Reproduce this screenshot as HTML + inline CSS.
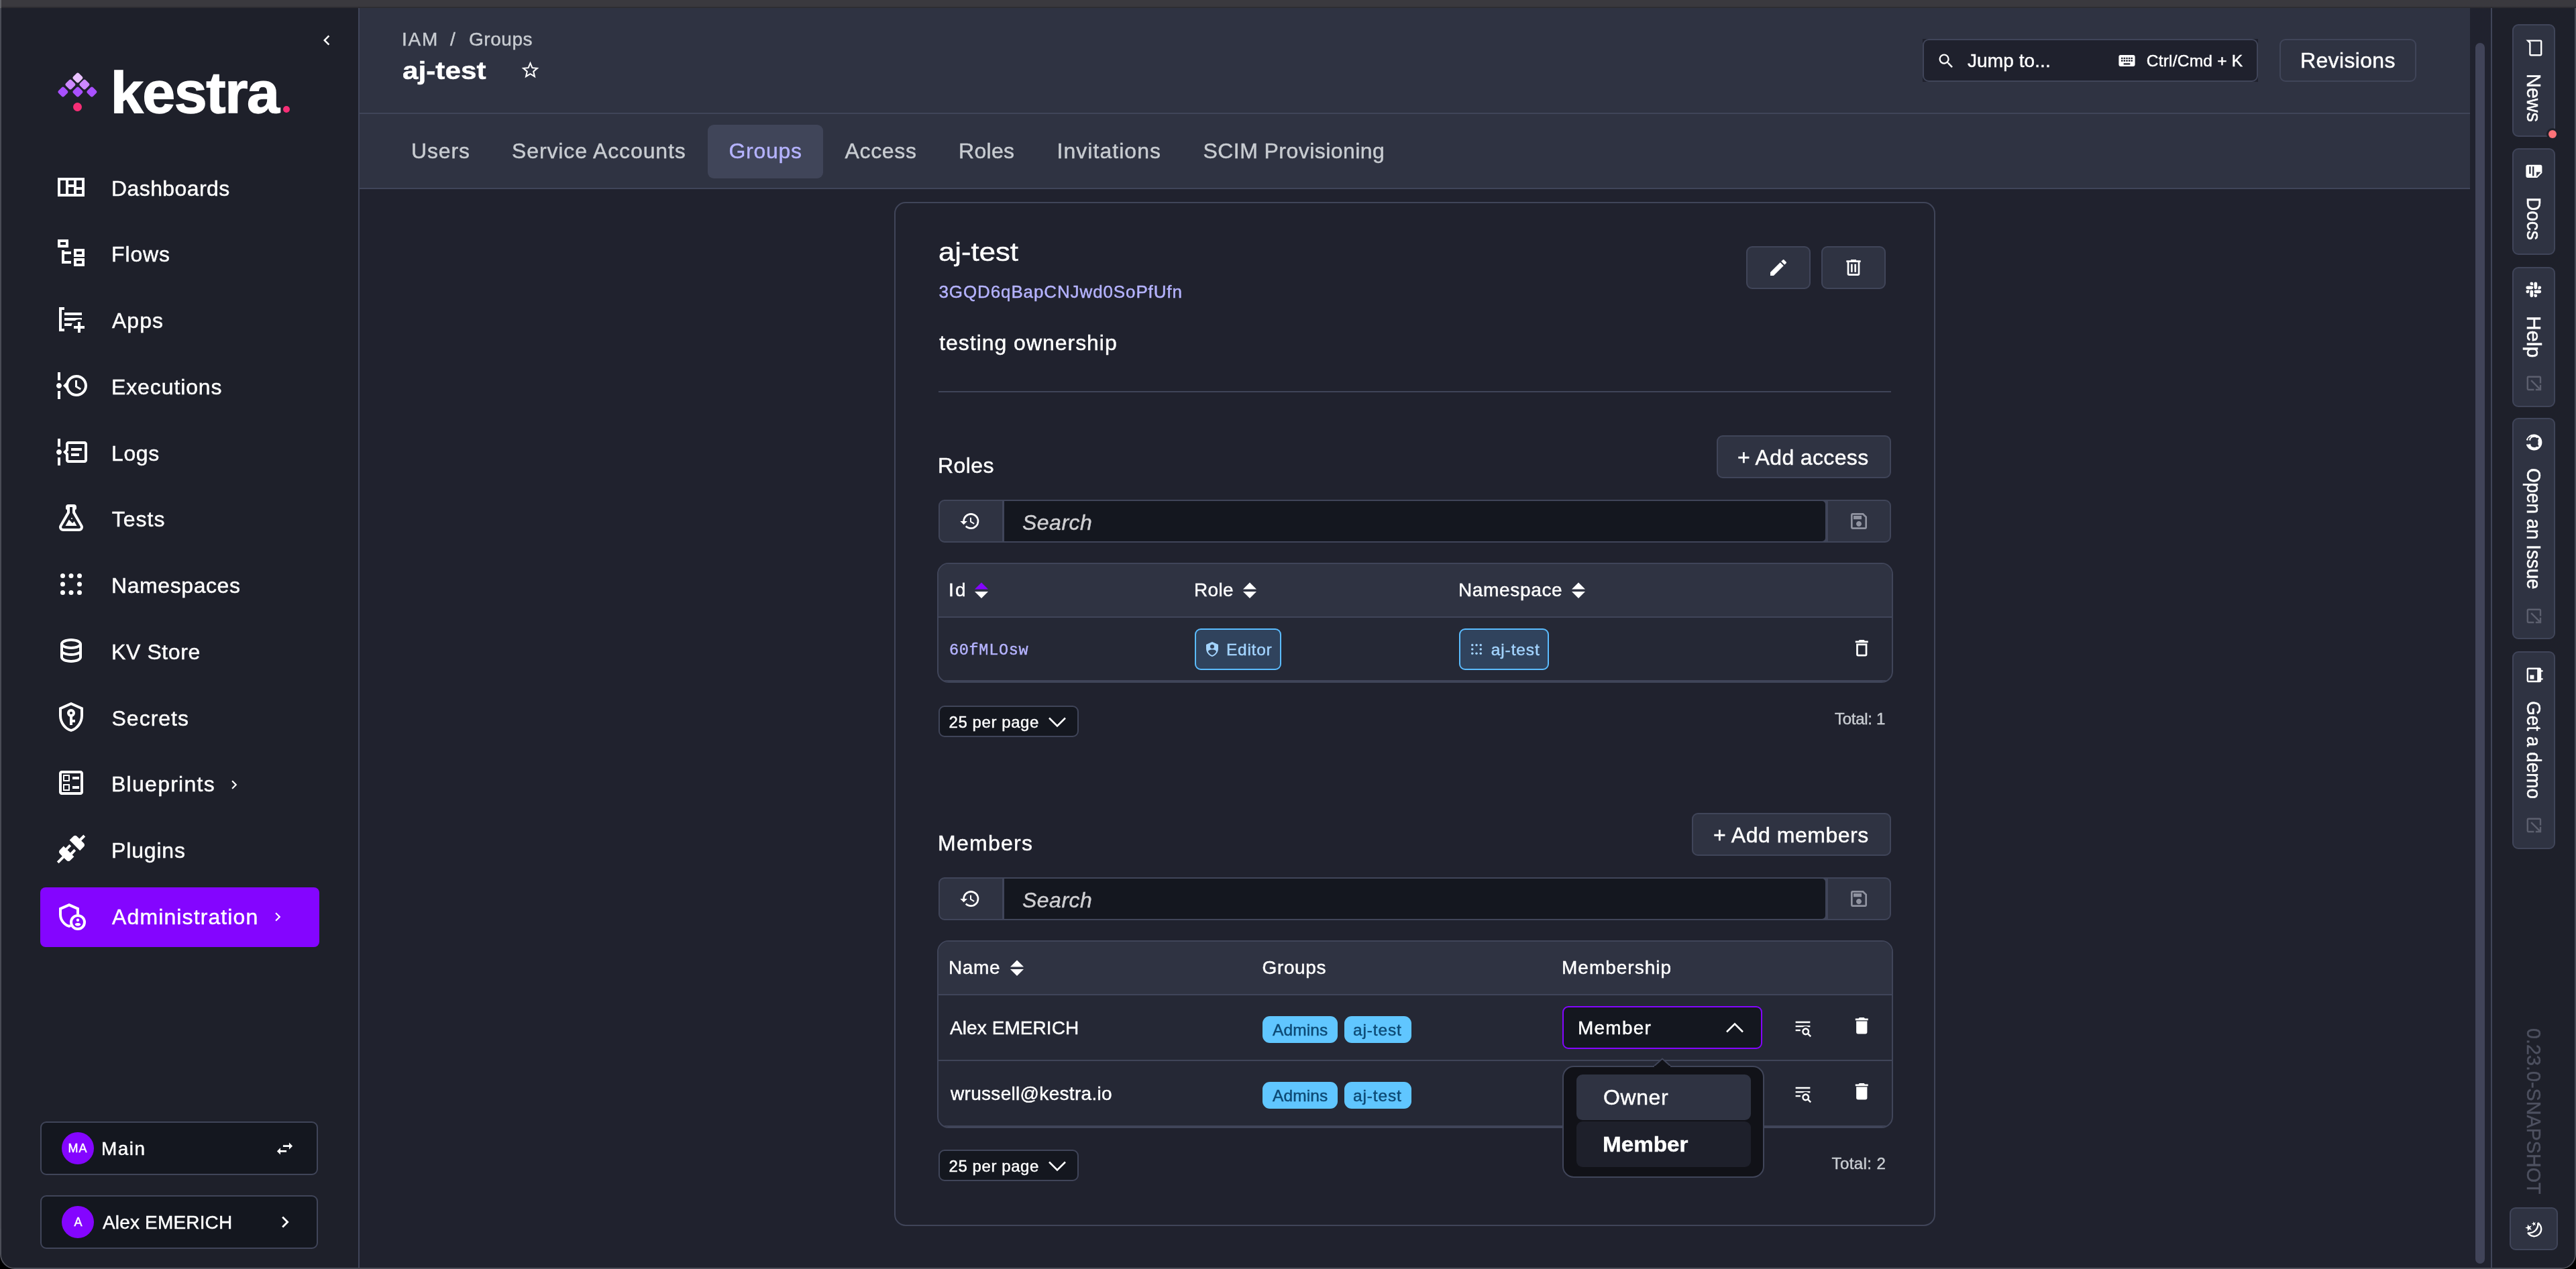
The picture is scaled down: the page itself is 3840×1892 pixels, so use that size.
<!DOCTYPE html>
<html lang="en"><head><meta charset="utf-8"><title>IAM / Groups / aj-test - Kestra</title>
<style>
html,body{margin:0;padding:0;background:#000;}
body{width:3840px;height:1892px;position:relative;overflow:hidden;font-family:'Liberation Sans', sans-serif;}
#app{position:absolute;left:0;top:0;width:3840px;height:1892px;overflow:hidden;will-change:transform;}
#app div,#app svg{position:absolute;}
.t{white-space:nowrap;line-height:1;-webkit-text-stroke:0.45px currentColor;}
</style></head><body><div id="app">
<div style="left:0px;top:0px;width:3840px;height:10px;background:#3a393e"></div>
<div style="left:0px;top:10px;width:3840px;height:2px;background:#2e2d32"></div>
<div style="left:0px;top:12px;width:535px;height:1880px;background:#1e202a"></div>
<div style="left:534px;top:12px;width:2px;height:1880px;background:#404559"></div>
<div style="left:536px;top:12px;width:3177px;height:1880px;background:#20222e"></div>
<div style="left:536px;top:12px;width:3146px;height:157px;background:#2f3342"></div>
<div style="left:536px;top:168px;width:3146px;height:2px;background:#404559"></div>
<div style="left:536px;top:170px;width:3146px;height:110px;background:#2f3342"></div>
<div style="left:536px;top:280px;width:3146px;height:2px;background:#404559"></div>
<div style="left:3690px;top:64px;width:14px;height:1820px;background:#414459;border-radius:7px"></div>
<div style="left:3713px;top:12px;width:2px;height:1880px;background:#404559"></div>
<div style="left:3715px;top:12px;width:125px;height:1880px;background:#1e202a"></div>
<svg viewBox="0 0 24 24" style="left:472.00px;top:44.50px;width:30px;height:30px;"><path fill="#fff" fill-rule="evenodd" d="M15.41,16.58L10.83,12L15.41,7.41L14,6L8,12L14,18L15.41,16.58Z"/></svg>
<div style="left:109.50px;top:109.50px;width:11.8px;height:11.8px;background:#e9c1ff;border-radius:2.8px;transform:rotate(45deg)"></div>
<div style="left:98.90px;top:120.20px;width:11.8px;height:11.8px;background:#cd88ff;border-radius:2.8px;transform:rotate(45deg)"></div>
<div style="left:120.10px;top:120.20px;width:11.8px;height:11.8px;background:#cd88ff;border-radius:2.8px;transform:rotate(45deg)"></div>
<div style="left:88.40px;top:131.00px;width:11.8px;height:11.8px;background:#a950ff;border-radius:2.8px;transform:rotate(45deg)"></div>
<div style="left:109.50px;top:131.00px;width:11.8px;height:11.8px;background:#a950ff;border-radius:2.8px;transform:rotate(45deg)"></div>
<div style="left:130.70px;top:131.00px;width:11.8px;height:11.8px;background:#a950ff;border-radius:2.8px;transform:rotate(45deg)"></div>
<div style="left:108.9px;top:152.5px;width:13px;height:13px;background:#f62e76;border-radius:50%"></div>
<div class="t" style="-webkit-text-stroke:1.4px #fff;left:164.70px;top:93.90px;font-size:88px;letter-spacing:-1.41px;color:#fff;font-weight:700;">kestra</div>
<div style="left:421.7px;top:158px;width:10px;height:10px;background:#f62e76;border-radius:50%"></div>
<svg viewBox="0 0 24 24" style="left:81.50px;top:254.50px;width:48px;height:48px;"><path fill="#fff" fill-rule="evenodd" d="M2 5H22V19H2ZM4 7V17H8V7ZM10 7V10H14V7ZM10 12V17H14V12ZM16 7V12H20V7ZM16 14V17H20V14Z"/></svg>
<div class="t" style="left:166.00px;top:264.50px;font-size:32px;letter-spacing:0.41px;color:#fff;">Dashboards</div>
<svg viewBox="0 0 24 24" style="left:81.50px;top:353.25px;width:48px;height:48px;"><path fill="#fff" fill-rule="evenodd" d="M12 13H7V18H12V20H5V10H7V11H12V13M8 4V6H4V4H8M10 2H2V8H10V2M20 11V13H16V11H20M22 9H14V15H22V9M20 18V20H16V18H20M22 16H14V22H22V16Z"/></svg>
<div class="t" style="left:166.00px;top:363.25px;font-size:32px;letter-spacing:0.86px;color:#fff;">Flows</div>
<svg viewBox="0 0 24 24" style="left:81.5px;top:452.0px;width:48px;height:48px"><path fill="#fff" d="M3 3V21H7V19H5V5H7V3ZM7 7H20V9H7ZM7 11H20V13H7ZM7 15H13V17H7Z"/><circle cx="18" cy="18" r="5.9" fill="#1e202a"/><path fill="#fff" d="M17 14H19V17H22V19H19V22H17V19H14V17H17Z"/></svg>
<div class="t" style="left:167.00px;top:462.00px;font-size:32px;letter-spacing:1.02px;color:#fff;">Apps</div>
<svg viewBox="0 0 24 24" style="left:81.50px;top:550.75px;width:48px;height:48px;"><path fill="#fff" fill-rule="evenodd" d="M4 2V8H2V2H4M2 22H4V16H2V22M5 12C5 13.11 4.11 14 3 14C1.9 14 1 13.11 1 12C1 10.9 1.9 10 3 10C4.11 10 5 10.9 5 12M16 4C20.42 4 24 7.58 24 12C24 16.42 20.42 20 16 20C12.4 20 9.36 17.62 8.35 14.35L6 12L8.35 9.65C9.36 6.38 12.4 4 16 4M16 6C12.69 6 10 8.69 10 12C10 15.31 12.69 18 16 18C19.31 18 22 15.31 22 12C22 8.69 19.31 6 16 6M15 13V8H16.5V12.2L19.5 14L18.82 15.26L15 13Z"/></svg>
<div class="t" style="left:166.00px;top:560.75px;font-size:32px;letter-spacing:0.89px;color:#fff;">Executions</div>
<svg viewBox="0 0 24 24" style="left:81.50px;top:649.50px;width:48px;height:48px;"><path fill="#fff" fill-rule="evenodd" d="M5 12C5 13.11 4.11 14 3 14S1 13.11 1 12 1.9 10 3 10 5 10.9 5 12M4 2V8H2V2H4M2 22V16H4V22H2M24 6V18C24 19.11 23.11 20 22 20H10C8.9 20 8 19.11 8 18V14L6 12L8 10V6C8 4.89 8.9 4 10 4H22C23.11 4 24 4.89 24 6M10 6V10.83L8.83 12L10 13.17V18H22V6H10M12 9H20V11H12V9M12 13H18V15H12V13Z"/></svg>
<div class="t" style="left:166.00px;top:659.50px;font-size:32px;letter-spacing:0.62px;color:#fff;">Logs</div>
<svg viewBox="0 0 24 24" style="left:81.50px;top:748.25px;width:48px;height:48px;"><path fill="#fff" fill-rule="evenodd" d="M5,19A1,1 0 0,0 6,20H18A1,1 0 0,0 19,19C19,18.79 18.93,18.59 18.82,18.43L13,8.35V4H11V8.35L5.18,18.43C5.07,18.59 5,18.79 5,19M6,22A3,3 0 0,1 3,19C3,18.4 3.18,17.84 3.5,17.37L9,7.81V6A1,1 0 0,1 8,5V4A2,2 0 0,1 10,2H14A2,2 0 0,1 16,4V5A1,1 0 0,1 15,6V7.81L20.5,17.37C20.82,17.84 21,18.4 21,19A3,3 0 0,1 18,22H6M13,16L14.34,14.66L16.27,18H7.73L10.39,13.39L13,16M12.5,12A0.5,0.5 0 0,1 13,12.5A0.5,0.5 0 0,1 12.5,13A0.5,0.5 0 0,1 12,12.5A0.5,0.5 0 0,1 12.5,12Z"/></svg>
<div class="t" style="left:166.75px;top:758.25px;font-size:32px;letter-spacing:1.02px;color:#fff;">Tests</div>
<svg viewBox="0 0 24 24" style="left:81.5px;top:847.0px;width:48px;height:48px"><circle cx="5.75" cy="5.75" r="1.75" fill="#fff"/><circle cx="5.75" cy="12" r="1.75" fill="#fff"/><circle cx="5.75" cy="18.25" r="1.75" fill="#fff"/><circle cx="12" cy="5.75" r="1.75" fill="#fff"/><circle cx="12" cy="18.25" r="1.75" fill="#fff"/><circle cx="18.25" cy="5.75" r="1.75" fill="#fff"/><circle cx="18.25" cy="12" r="1.75" fill="#fff"/><circle cx="18.25" cy="18.25" r="1.75" fill="#fff"/></svg>
<div class="t" style="left:166.00px;top:857.00px;font-size:32px;letter-spacing:0.58px;color:#fff;">Namespaces</div>
<svg viewBox="0 0 24 24" style="left:81.50px;top:945.75px;width:48px;height:48px;"><path fill="#fff" fill-rule="evenodd" d="M12 3C7.58 3 4 4.79 4 7V17C4 19.21 7.59 21 12 21S20 19.21 20 17V7C20 4.79 16.42 3 12 3M18 17C18 17.5 15.87 19 12 19S6 17.5 6 17V14.77C7.61 15.55 9.72 16 12 16S16.39 15.55 18 14.77V17M18 12.45C16.7 13.4 14.42 14 12 14C9.58 14 7.3 13.4 6 12.45V9.64C7.47 10.47 9.61 11 12 11C14.39 11 16.53 10.47 18 9.64V12.45M12 9C8.13 9 6 7.5 6 7S8.13 5 12 5C15.87 5 18 6.5 18 7S15.87 9 12 9Z"/></svg>
<div class="t" style="left:166.00px;top:955.75px;font-size:32px;letter-spacing:0.6px;color:#fff;">KV Store</div>
<svg viewBox="0 0 24 24" style="left:81.50px;top:1044.50px;width:48px;height:48px;"><path fill="#fff" fill-rule="evenodd" d="M21,11C21,16.55 17.16,21.74 12,23C6.84,21.74 3,16.55 3,11V5L12,1L21,5V11M12,21C15.75,20 19,15.54 19,11.22V6.3L12,3.18L5,6.3V11.22C5,15.54 8.25,20 12,21M12,6A3,3 0 0,1 15,9C15,10.31 14.17,11.42 13,11.83V14H15V16H13V18H11V11.83C9.83,11.42 9,10.31 9,9A3,3 0 0,1 12,6M12,8A1,1 0 0,0 11,9A1,1 0 0,0 12,10A1,1 0 0,0 13,9A1,1 0 0,0 12,8Z"/></svg>
<div class="t" style="left:166.50px;top:1054.50px;font-size:32px;letter-spacing:1.0px;color:#fff;">Secrets</div>
<svg viewBox="0 0 24 24" style="left:81.50px;top:1143.25px;width:48px;height:48px;"><path fill="#fff" fill-rule="evenodd" d="M13 7.5H18V9.5H13V7.5M13 14.5H18V16.5H13V14.5M19 3C20.1 3 21 3.9 21 5V19C21 20.1 20.1 21 19 21H5C3.9 21 3 20.1 3 19V5C3 3.9 3.9 3 5 3H19M19 19V5H5V19H19M11 6V11H6V6H11M10 10V7H7V10H10M11 13V18H6V13H11M10 17V14H7V17H10Z"/></svg>
<div class="t" style="left:166.00px;top:1153.25px;font-size:32px;letter-spacing:1.27px;color:#fff;">Blueprints</div>
<svg viewBox="0 0 24 24" style="left:335.50px;top:1157.00px;width:26px;height:26px;"><path fill="#fff" fill-rule="evenodd" d="M8.59,16.58L13.17,12L8.59,7.41L10,6L16,12L10,18L8.59,16.58Z"/></svg>
<svg viewBox="0 0 24 24" style="left:81.50px;top:1242.00px;width:48px;height:48px;"><path fill="#fff" fill-rule="evenodd" d="M21.4 7.5C22.2 8.3 22.2 9.6 21.4 10.3L18.6 13.1L10.8 5.3L13.6 2.5C14.4 1.7 15.7 1.7 16.4 2.5L18.2 4.3L21.2 1.3L22.6 2.7L19.6 5.7L21.4 7.5M15.6 13.3L14.2 11.9L11.4 14.7L9.3 12.6L12.1 9.8L10.7 8.4L7.9 11.2L6.4 9.8L3.6 12.6C2.8 13.4 2.8 14.7 3.6 15.4L5.4 17.2L1.4 21.2L2.8 22.6L6.8 18.6L8.6 20.4C9.4 21.2 10.7 21.2 11.4 20.4L14.2 17.6L12.8 16.2L15.6 13.3Z"/></svg>
<div class="t" style="left:166.00px;top:1252.00px;font-size:32px;letter-spacing:0.84px;color:#fff;">Plugins</div>
<div style="left:60px;top:1323px;width:416px;height:89px;background:#8405ff;border-radius:8px"></div>
<svg viewBox="0 0 24 24" style="left:81.5px;top:1340.75px;width:48px;height:48px"><path fill="none" stroke="#fff" stroke-width="2" stroke-linejoin="miter" d="M10.5 4.1L17 6.95V11.2C17 15.2 14.2 18.9 10.5 19.95C6.8 18.9 4 15.2 4 11.2V6.95Z"/><circle cx="17" cy="17" r="6" fill="#8405ff"/><circle cx="17" cy="17" r="5" fill="none" stroke="#fff" stroke-width="2"/><circle cx="17" cy="15.4" r="1.1" fill="#fff"/><path fill="#fff" d="M14.8 18.6C14.8 17.9 16.3 17.5 17 17.5S19.2 17.9 19.2 18.6C18.8 19.3 17.9 19.8 17 19.8S15.2 19.3 14.8 18.6Z"/></svg>
<div class="t" style="left:167.00px;top:1350.75px;font-size:32px;letter-spacing:1.12px;color:#fff;">Administration</div>
<svg viewBox="0 0 24 24" style="left:400.50px;top:1353.50px;width:26px;height:26px;"><path fill="#fff" fill-rule="evenodd" d="M8.59,16.58L13.17,12L8.59,7.41L10,6L16,12L10,18L8.59,16.58Z"/></svg>
<div style="left:60px;top:1672px;width:414px;height:80px;background:#14171f;border:2px solid #404559;border-radius:9px;box-sizing:border-box"></div>
<div style="left:92px;top:1688px;width:48px;height:48px;background:#8405ff;border-radius:50%"></div>
<div class="t" style="left:101.50px;top:1702.50px;font-size:18px;letter-spacing:1.01px;color:#fff;">MA</div>
<div class="t" style="left:151.00px;top:1699.00px;font-size:28px;letter-spacing:1.46px;color:#fff;">Main</div>
<div style="left:60px;top:1782px;width:414px;height:80px;background:#14171f;border:2px solid #404559;border-radius:9px;box-sizing:border-box"></div>
<div style="left:92px;top:1798px;width:48px;height:48px;background:#8405ff;border-radius:50%"></div>
<div class="t" style="left:110.50px;top:1812.50px;font-size:18px;color:#fff;">A</div>
<div class="t" style="left:153.00px;top:1809.00px;font-size:28px;letter-spacing:0.17px;color:#fff;">Alex EMERICH</div>
<svg viewBox="0 0 24 24" style="left:408.50px;top:1696.50px;width:31px;height:31px;"><path fill="#fff" fill-rule="evenodd" d="M21,9L17,5V8H10V10H17V13M7,11L3,15L7,19V16H14V14H7V11Z"/></svg>
<svg viewBox="0 0 24 24" style="left:408.00px;top:1804.50px;width:34px;height:34px;"><path fill="#fff" fill-rule="evenodd" d="M8.59,16.58L13.17,12L8.59,7.41L10,6L16,12L10,18L8.59,16.58Z"/></svg>
<div class="t" style="left:599.00px;top:45.00px;font-size:28px;letter-spacing:1.77px;color:#c8ccd1;">IAM</div>
<div class="t" style="left:671.00px;top:45.00px;font-size:28px;color:#c8ccd1;">/</div>
<div class="t" style="left:699.00px;top:45.00px;font-size:28px;letter-spacing:0.54px;color:#c8ccd1;">Groups</div>
<div class="t" style="left:599.87px;top:86.50px;font-size:37.5px;transform:scaleX(1.1277);transform-origin:0 0;color:#fff;font-weight:700;">aj-test</div>
<svg viewBox="0 0 24 24" style="left:774.50px;top:88.50px;width:31px;height:31px;"><path fill="#fff" fill-rule="evenodd" d="M12,15.39L8.24,17.66L9.23,13.38L5.91,10.5L10.29,10.13L12,6.09L13.71,10.13L18.09,10.5L14.77,13.38L15.76,17.66M22,9.24L14.81,8.63L12,2L9.19,8.63L2,9.24L7.45,13.97L5.82,21L12,17.27L18.18,21L16.54,13.97L22,9.24Z"/></svg>
<div style="left:2866px;top:58px;width:500px;height:64px;background:#1f212d"></div>
<div style="left:2866px;top:58px;width:500px;height:64px;background:#1f212d;border:2px solid #404559;border-radius:9px;box-sizing:border-box"></div>
<svg viewBox="0 0 24 24" style="left:2887.30px;top:76.50px;width:28px;height:28px;"><path fill="#fff" fill-rule="evenodd" d="M9.5,3A6.5,6.5 0 0,1 16,9.5C16,11.11 15.41,12.59 14.44,13.73L14.71,14H15.5L20.5,19L19,20.5L14,15.5V14.71L13.73,14.44C12.59,15.41 11.11,16 9.5,16A6.5,6.5 0 0,1 3,9.5A6.5,6.5 0 0,1 9.5,3M9.5,5C7,5 5,7 5,9.5C5,12 7,14 9.5,14C12,14 14,12 14,9.5C14,7 12,5 9.5,5Z"/></svg>
<div class="t" style="left:2933.00px;top:77.00px;font-size:28px;letter-spacing:0.09px;color:#fff;">Jump to...</div>
<svg viewBox="0 0 24 24" style="left:3155.50px;top:75.50px;width:29px;height:29px;"><path fill="#fff" fill-rule="evenodd" d="M19,10H17V8H19M19,13H17V11H19M16,10H14V8H16M16,13H14V11H16M16,17H8V15H16M7,10H5V8H7M7,13H5V11H7M8,11H10V13H8M8,8H10V10H8M11,11H13V13H11M11,8H13V10H11M20,5H4C2.89,5 2,5.89 2,7V17A2,2 0 0,0 4,19H20A2,2 0 0,0 22,17V7C22,5.89 21.1,5 20,5Z"/></svg>
<div class="t" style="left:3199.75px;top:79.00px;font-size:24.5px;letter-spacing:0.22px;color:#fff;">Ctrl/Cmd + K</div>
<div style="left:3398px;top:58px;width:204px;height:64px;background:#2f3342;border:2px solid #404559;border-radius:9px;box-sizing:border-box"></div>
<div class="t" style="left:3429.00px;top:74.00px;font-size:32px;letter-spacing:0.35px;color:#fff;">Revisions</div>
<div style="left:1055px;top:186px;width:172px;height:80px;background:#404559;border-radius:9px"></div>
<div class="t" style="left:613.00px;top:209.00px;font-size:32px;letter-spacing:0.86px;color:#c8ccd1;">Users</div>
<div class="t" style="left:763.00px;top:209.00px;font-size:32px;letter-spacing:0.89px;color:#c8ccd1;">Service Accounts</div>
<div class="t" style="left:1086.50px;top:209.00px;font-size:32px;letter-spacing:0.71px;color:#b5b3ff;">Groups</div>
<div class="t" style="left:1259.50px;top:209.00px;font-size:32px;letter-spacing:0.67px;color:#c8ccd1;">Access</div>
<div class="t" style="left:1429.00px;top:209.00px;font-size:32px;letter-spacing:0.3px;color:#c8ccd1;">Roles</div>
<div class="t" style="left:1575.50px;top:209.00px;font-size:32px;letter-spacing:1.04px;color:#c8ccd1;">Invitations</div>
<div class="t" style="left:1793.50px;top:209.00px;font-size:32px;letter-spacing:0.44px;color:#c8ccd1;">SCIM Provisioning</div>
<div style="left:1333px;top:301px;width:1552px;height:1527px;border:2px solid #404559;border-radius:17px;box-sizing:border-box;background:#20222e"></div>
<div class="t" style="left:1399.09px;top:356.30px;font-size:39.5px;transform:scaleX(1.1052);transform-origin:0 0;color:#fff;">aj-test</div>
<div class="t" style="left:1399.50px;top:421.70px;font-size:26px;letter-spacing:0.88px;color:#b5b3ff;">3GQD6qBapCNJwd0SoPfUfn</div>
<div class="t" style="left:1400.20px;top:495.00px;font-size:32px;letter-spacing:0.97px;color:#fff;">testing ownership</div>
<div style="left:2603px;top:367px;width:96px;height:64px;background:#2f3342;border:2px solid #404559;border-radius:9px;box-sizing:border-box"></div>
<div style="left:2715px;top:367px;width:96px;height:64px;background:#2f3342;border:2px solid #404559;border-radius:9px;box-sizing:border-box"></div>
<svg viewBox="0 0 24 24" style="left:2635.00px;top:383.00px;width:32px;height:32px;"><path fill="#fff" fill-rule="evenodd" d="M20.71,7.04C21.1,6.65 21.1,6 20.71,5.63L18.37,3.29C18,2.9 17.35,2.9 16.96,3.29L15.12,5.12L18.87,8.87M3,17.25V21H6.75L17.81,9.93L14.06,6.18L3,17.25Z"/></svg>
<svg viewBox="0 0 24 24" style="left:2747.00px;top:383.00px;width:32px;height:32px;"><path fill="#fff" fill-rule="evenodd" d="M9,3V4H4V6H5V19A2,2 0 0,0 7,21H17A2,2 0 0,0 19,19V6H20V4H15V3H9M7,6H17V19H7V6M9,8V17H11V8H9M13,8V17H15V8H13Z"/></svg>
<div style="left:1399px;top:583px;width:1420px;height:2px;background:#404559"></div>
<div class="t" style="left:1398.00px;top:678.00px;font-size:32px;letter-spacing:0.42px;color:#fff;">Roles</div>
<div style="left:2559px;top:649px;width:260px;height:64px;background:#2f3342;border:2px solid #404559;border-radius:9px;box-sizing:border-box"></div>
<div class="t" style="left:2590.00px;top:665.50px;font-size:32px;letter-spacing:0.36px;color:#fff;">+ Add access</div>
<div style="left:1399px;top:745px;width:1420px;height:64px;background:#2f3342;border:2px solid #404559;border-radius:9px;box-sizing:border-box"></div>
<div style="left:1494px;top:745px;width:1231px;height:64px;background:#404559"></div>
<div style="left:1497px;top:747px;width:1224px;height:60px;background:#14171f;border-radius:0 5px 5px 0"></div>
<svg viewBox="0 0 24 24" style="left:1429.50px;top:761.00px;width:32px;height:32px;"><path fill="#fff" fill-rule="evenodd" d="M13.5,8H12V13L16.28,15.54L17,14.33L13.5,12.25V8M13,3A9,9 0 0,0 4,12H1L4.96,16.03L9,12H6A7,7 0 0,1 13,5A7,7 0 0,1 20,12A7,7 0 0,1 13,19C11.07,19 9.32,18.21 8.06,16.94L6.64,18.36C8.27,20 10.5,21 13,21A9,9 0 0,0 22,12A9,9 0 0,0 13,3"/></svg>
<div class="t" style="left:1524.00px;top:763.00px;font-size:32px;letter-spacing:0.48px;color:#cfcfd2;font-style:italic;">Search</div>
<svg viewBox="0 0 24 24" style="left:2755.00px;top:761.00px;width:32px;height:32px;"><path fill="#9093a0" fill-rule="evenodd" d="M17 3H5C3.89 3 3 3.9 3 5V19C3 20.1 3.89 21 5 21H19C20.1 21 21 20.1 21 19V7L17 3M19 19H5V5H16.17L19 7.83V19M12 12C10.34 12 9 13.34 9 15S10.34 18 12 18 15 16.66 15 15 13.66 12 12 12M6 6H15V10H6V6Z"/></svg>
<div style="left:1397px;top:839px;width:1425px;height:179px;background:#252835;border:2px solid #404559;border-radius:17px;box-sizing:border-box;overflow:hidden"><div style="left:0;top:0;width:1425px;height:78px;background:#2f3342"></div><div style="left:0;top:78px;width:1425px;height:2px;background:#404559"></div><div style="left:0;top:173px;width:1425px;height:4px;background:#404559"></div></div>
<div class="t" style="left:1414.00px;top:866.00px;font-size:28px;letter-spacing:2.22px;color:#fff;">Id</div>
<svg viewBox="0 0 20 24" style="left:1453px;top:868px;width:20px;height:24px"><path fill="#8405ff" d="M0 10.5L10 0.5L20 10.5Z"/><path fill="#fff" d="M0 14L10 24L20 14Z"/></svg>
<div class="t" style="left:1780.00px;top:866.00px;font-size:28px;letter-spacing:0.33px;color:#fff;">Role</div>
<svg viewBox="0 0 20 24" style="left:1853px;top:868px;width:20px;height:24px"><path fill="#fff" d="M0 10.5L10 0.5L20 10.5Z"/><path fill="#fff" d="M0 14L10 24L20 14Z"/></svg>
<div class="t" style="left:2174.00px;top:866.00px;font-size:28px;letter-spacing:0.65px;color:#fff;">Namespace</div>
<svg viewBox="0 0 20 24" style="left:2343px;top:868px;width:20px;height:24px"><path fill="#fff" d="M0 10.5L10 0.5L20 10.5Z"/><path fill="#fff" d="M0 14L10 24L20 14Z"/></svg>
<div class="t" style="left:1415.00px;top:958.30px;font-size:23.5px;letter-spacing:0.68px;color:#b5b3ff;font-family:'Liberation Mono', monospace;">60fMLOsw</div>
<div style="left:1781px;top:937px;width:128.5px;height:61.5px;background:#30435d;border:2px solid #5bbcff;border-radius:9px;box-sizing:border-box"></div>
<svg viewBox="0 0 24 24" style="left:1795.00px;top:956.00px;width:24px;height:24px;"><path fill="#a3d4ff" fill-rule="evenodd" d="M12,1L3,5V11C3,16.55 6.84,21.74 12,23C17.16,21.74 21,16.55 21,11V5L12,1M12,5A3,3 0 0,1 15,8A3,3 0 0,1 12,11A3,3 0 0,1 9,8A3,3 0 0,1 12,5M17.13,17C15.92,18.85 14.11,20.24 12,20.92C9.89,20.24 8.08,18.85 6.87,17C6.53,16.5 6.24,16 6,15.47C6,13.82 8.71,12.47 12,12.47C15.29,12.47 18,13.79 18,15.47C17.76,16 17.47,16.5 17.13,17Z"/></svg>
<div class="t" style="left:1828.00px;top:956.50px;font-size:24.5px;letter-spacing:0.73px;color:#a3d4ff;">Editor</div>
<div style="left:2175px;top:937px;width:134px;height:61.5px;background:#30435d;border:2px solid #5bbcff;border-radius:9px;box-sizing:border-box"></div>
<svg viewBox="0 0 24 24" style="left:2189px;top:956px;width:24px;height:24px"><circle cx="5.75" cy="5.75" r="1.75" fill="#a3d4ff"/><circle cx="5.75" cy="12" r="1.75" fill="#a3d4ff"/><circle cx="5.75" cy="18.25" r="1.75" fill="#a3d4ff"/><circle cx="12" cy="5.75" r="1.75" fill="#a3d4ff"/><circle cx="12" cy="18.25" r="1.75" fill="#a3d4ff"/><circle cx="18.25" cy="5.75" r="1.75" fill="#a3d4ff"/><circle cx="18.25" cy="12" r="1.75" fill="#a3d4ff"/><circle cx="18.25" cy="18.25" r="1.75" fill="#a3d4ff"/></svg>
<div class="t" style="left:2222.75px;top:956.50px;font-size:24.5px;letter-spacing:0.89px;color:#a3d4ff;">aj-test</div>
<svg viewBox="0 0 24 24" style="left:2758.50px;top:949.75px;width:32.5px;height:32.5px;"><path fill="#fff" fill-rule="evenodd" d="M6,19A2,2 0 0,0 8,21H16A2,2 0 0,0 18,19V7H6V19M8,9H16V19H8V9M15.5,4L14.5,3H9.5L8.5,4H5V6H19V4H15.5Z"/></svg>
<div style="left:1399px;top:1052px;width:209px;height:47px;background:#14171f;border:2px solid #404559;border-radius:9px;box-sizing:border-box"></div>
<div class="t" style="left:1414.50px;top:1064.50px;font-size:24px;letter-spacing:0.57px;color:#fff;">25 per page</div>
<svg viewBox="0 0 26 16" style="left:1562.5px;top:1068.5px;width:26px;height:16px"><path fill="none" stroke="#fff" stroke-width="2.6" d="M1 1.5L13 13.5L25 1.5"/></svg>
<div class="t" style="left:2735.00px;top:1059.50px;font-size:24px;letter-spacing:-0.29px;color:#c8ccd1;">Total: 1</div>
<div class="t" style="left:1398.00px;top:1241.00px;font-size:32px;letter-spacing:1.27px;color:#fff;">Members</div>
<div style="left:2522px;top:1212px;width:297px;height:64px;background:#2f3342;border:2px solid #404559;border-radius:9px;box-sizing:border-box"></div>
<div class="t" style="left:2554.00px;top:1228.50px;font-size:32px;letter-spacing:0.52px;color:#fff;">+ Add members</div>
<div style="left:1399px;top:1308px;width:1420px;height:64px;background:#2f3342;border:2px solid #404559;border-radius:9px;box-sizing:border-box"></div>
<div style="left:1494px;top:1308px;width:1231px;height:64px;background:#404559"></div>
<div style="left:1497px;top:1310px;width:1224px;height:60px;background:#14171f;border-radius:0 5px 5px 0"></div>
<svg viewBox="0 0 24 24" style="left:1429.50px;top:1324.00px;width:32px;height:32px;"><path fill="#fff" fill-rule="evenodd" d="M13.5,8H12V13L16.28,15.54L17,14.33L13.5,12.25V8M13,3A9,9 0 0,0 4,12H1L4.96,16.03L9,12H6A7,7 0 0,1 13,5A7,7 0 0,1 20,12A7,7 0 0,1 13,19C11.07,19 9.32,18.21 8.06,16.94L6.64,18.36C8.27,20 10.5,21 13,21A9,9 0 0,0 22,12A9,9 0 0,0 13,3"/></svg>
<div class="t" style="left:1524.00px;top:1326.00px;font-size:32px;letter-spacing:0.48px;color:#cfcfd2;font-style:italic;">Search</div>
<svg viewBox="0 0 24 24" style="left:2755.00px;top:1324.00px;width:32px;height:32px;"><path fill="#9093a0" fill-rule="evenodd" d="M17 3H5C3.89 3 3 3.9 3 5V19C3 20.1 3.89 21 5 21H19C20.1 21 21 20.1 21 19V7L17 3M19 19H5V5H16.17L19 7.83V19M12 12C10.34 12 9 13.34 9 15S10.34 18 12 18 15 16.66 15 15 13.66 12 12 12M6 6H15V10H6V6Z"/></svg>
<div style="left:1397px;top:1402px;width:1425px;height:280px;background:#252835;border:2px solid #404559;border-radius:17px;box-sizing:border-box;overflow:hidden"><div style="left:0;top:0;width:1425px;height:78px;background:#2f3342"></div><div style="left:0;top:78px;width:1425px;height:2px;background:#404559"></div><div style="left:0;top:176px;width:1425px;height:2px;background:#404559"></div><div style="left:0;top:274px;width:1425px;height:4px;background:#404559"></div></div>
<div class="t" style="left:1414.00px;top:1429.00px;font-size:28px;letter-spacing:0.63px;color:#fff;">Name</div>
<svg viewBox="0 0 20 24" style="left:1505.75px;top:1431px;width:20px;height:24px"><path fill="#fff" d="M0 10.5L10 0.5L20 10.5Z"/><path fill="#fff" d="M0 14L10 24L20 14Z"/></svg>
<div class="t" style="left:1881.50px;top:1429.00px;font-size:28px;letter-spacing:0.64px;color:#fff;">Groups</div>
<div class="t" style="left:2328.00px;top:1429.00px;font-size:28px;letter-spacing:1.0px;color:#fff;">Membership</div>
<div class="t" style="left:1416.00px;top:1519.00px;font-size:28px;letter-spacing:0.08px;color:#fff;">Alex EMERICH</div>
<div style="left:1882px;top:1515px;width:112px;height:40px;background:#60c6ff;border-radius:11px"></div>
<div class="t" style="left:1897.00px;top:1523.75px;font-size:24.5px;letter-spacing:0.11px;color:#0d4a75;">Admins</div>
<div style="left:2004px;top:1515px;width:100px;height:40px;background:#60c6ff;border-radius:11px"></div>
<div class="t" style="left:2017.00px;top:1523.75px;font-size:24.5px;letter-spacing:0.85px;color:#0d4a75;">aj-test</div>
<svg viewBox="0 0 24 24" style="left:2673.00px;top:1518.00px;width:29px;height:29px;"><path fill="#fff" fill-rule="evenodd" d="M19.31 18.9L22.39 22L21 23.39L17.88 20.32C17.19 20.75 16.37 21 15.5 21C13 21 11 19 11 16.5C11 14 13 12 15.5 12C18 12 20 14 20 16.5C20 17.38 19.75 18.21 19.31 18.9M15.5 19C16.88 19 18 17.88 18 16.5C18 15.12 16.88 14 15.5 14C14.12 14 13 15.12 13 16.5C13 17.88 14.12 19 15.5 19M21 4V6H3V4H21M3 16V14H9V16H3M3 11V9H21V11H18.97C17.96 10.37 16.77 10 15.5 10C14.23 10 13.04 10.37 12.03 11H3Z"/></svg>
<svg viewBox="0 0 24 24" style="left:2758.50px;top:1512.75px;width:32.5px;height:32.5px;"><path fill="#fff" fill-rule="evenodd" d="M19,4H15.5L14.5,3H9.5L8.5,4H5V6H19M6,19A2,2 0 0,0 8,21H16A2,2 0 0,0 18,19V7H6V19Z"/></svg>
<div class="t" style="left:1417.00px;top:1617.00px;font-size:28px;letter-spacing:0.31px;color:#fff;">wrussell@kestra.io</div>
<div style="left:1882px;top:1613px;width:112px;height:40px;background:#60c6ff;border-radius:11px"></div>
<div class="t" style="left:1897.00px;top:1621.75px;font-size:24.5px;letter-spacing:0.11px;color:#0d4a75;">Admins</div>
<div style="left:2004px;top:1613px;width:100px;height:40px;background:#60c6ff;border-radius:11px"></div>
<div class="t" style="left:2017.00px;top:1621.75px;font-size:24.5px;letter-spacing:0.85px;color:#0d4a75;">aj-test</div>
<svg viewBox="0 0 24 24" style="left:2673.00px;top:1616.00px;width:29px;height:29px;"><path fill="#fff" fill-rule="evenodd" d="M19.31 18.9L22.39 22L21 23.39L17.88 20.32C17.19 20.75 16.37 21 15.5 21C13 21 11 19 11 16.5C11 14 13 12 15.5 12C18 12 20 14 20 16.5C20 17.38 19.75 18.21 19.31 18.9M15.5 19C16.88 19 18 17.88 18 16.5C18 15.12 16.88 14 15.5 14C14.12 14 13 15.12 13 16.5C13 17.88 14.12 19 15.5 19M21 4V6H3V4H21M3 16V14H9V16H3M3 11V9H21V11H18.97C17.96 10.37 16.77 10 15.5 10C14.23 10 13.04 10.37 12.03 11H3Z"/></svg>
<svg viewBox="0 0 24 24" style="left:2758.50px;top:1610.75px;width:32.5px;height:32.5px;"><path fill="#fff" fill-rule="evenodd" d="M19,4H15.5L14.5,3H9.5L8.5,4H5V6H19M6,19A2,2 0 0,0 8,21H16A2,2 0 0,0 18,19V7H6V19Z"/></svg>
<div style="left:2329px;top:1500px;width:298px;height:63.5px;background:#14171f;border:2px solid #8405ff;border-radius:9px;box-sizing:border-box"></div>
<div class="t" style="left:2352.00px;top:1519.00px;font-size:28px;letter-spacing:1.23px;color:#fff;">Member</div>
<svg viewBox="0 0 26 16" style="left:2573px;top:1524px;width:26px;height:16px"><path fill="none" stroke="#fff" stroke-width="2.6" d="M1 14.5L13 2.5L25 14.5"/></svg>
<svg viewBox="0 0 28 14" style="left:2464px;top:1577px;width:28px;height:14px"><path fill="#111218" stroke="#404559" stroke-width="2" d="M0 14L14 1.5L28 14"/></svg>
<div style="left:2329px;top:1589px;width:301px;height:167px;background:#111218;border:2px solid #404559;border-radius:17px;box-sizing:border-box"></div>
<div style="left:2466px;top:1589px;width:24px;height:3px;background:#111218"></div>
<div style="left:2350px;top:1602px;width:260px;height:68px;background:#2f3342;border-radius:9px"></div>
<div style="left:2350px;top:1672px;width:260px;height:68px;background:#1e202b;border-radius:9px"></div>
<div class="t" style="left:2390.00px;top:1620.00px;font-size:32px;letter-spacing:0.6px;color:#fff;">Owner</div>
<div class="t" style="left:2388.92px;top:1690.00px;font-size:32px;transform:scaleX(1.0395);transform-origin:0 0;color:#fff;font-weight:700;">Member</div>
<div style="left:1399px;top:1714px;width:209px;height:47px;background:#14171f;border:2px solid #404559;border-radius:9px;box-sizing:border-box"></div>
<div class="t" style="left:1414.50px;top:1726.50px;font-size:24px;letter-spacing:0.57px;color:#fff;">25 per page</div>
<svg viewBox="0 0 26 16" style="left:1562.5px;top:1730.5px;width:26px;height:16px"><path fill="none" stroke="#fff" stroke-width="2.6" d="M1 1.5L13 13.5L25 1.5"/></svg>
<div class="t" style="left:2730.50px;top:1723.00px;font-size:24px;letter-spacing:0.42px;color:#c8ccd1;">Total: 2</div>
<div style="left:3745px;top:36px;width:64px;height:168px;background:#2f3342;border:2px solid #404559;border-radius:9px;box-sizing:border-box"></div>
<svg viewBox="0 0 24 24" style="left:3762.80px;top:57.40px;width:28.8px;height:28.8px;transform:rotate(90deg);"><path fill="#fff" fill-rule="evenodd" d="M20,2H4A2,2 0 0,0 2,4V22L6,18H20A2,2 0 0,0 22,16V4A2,2 0 0,0 20,2M20,16H5.17L4,17.17V4H20V16Z"/></svg>
<div style="left:3767.00px;top:112.00px;width:0;height:0;transform:rotate(90deg);transform-origin:0 0"><div class="t" style="left:-1.92px;top:-25.00px;font-size:30px;transform:scaleX(0.9581);transform-origin:0 0;color:#fff;">News</div></div>
<div style="left:3745px;top:220.5px;width:64px;height:159.5px;background:#2f3342;border:2px solid #404559;border-radius:9px;box-sizing:border-box"></div>
<svg viewBox="0 0 24 24" style="left:3762.80px;top:241.40px;width:28.8px;height:28.8px;transform:rotate(90deg);"><path fill="#fff" fill-rule="evenodd" d="M13,9H18.5L13,3.5V9M6,2H14L20,8V20A2,2 0 0,1 18,22H6C4.89,22 4,21.1 4,20V4C4,2.89 4.89,2 6,2M15,18V16H6V18H15M18,14V12H6V14H18Z"/></svg>
<div style="left:3767.00px;top:296.00px;width:0;height:0;transform:rotate(90deg);transform-origin:0 0"><div class="t" style="left:-1.87px;top:-25.00px;font-size:30px;transform:scaleX(0.9334);transform-origin:0 0;color:#fff;">Docs</div></div>
<div style="left:3745px;top:397.5px;width:64px;height:209.0px;background:#2f3342;border:2px solid #404559;border-radius:9px;box-sizing:border-box"></div>
<svg viewBox="0 0 24 24" style="left:3762.80px;top:417.80px;width:28.8px;height:28.8px;transform:rotate(90deg);"><path fill="#fff" fill-rule="evenodd" d="M6,15A2,2 0 0,1 4,17A2,2 0 0,1 2,15A2,2 0 0,1 4,13H6V15M7,15A2,2 0 0,1 9,13A2,2 0 0,1 11,15V20A2,2 0 0,1 9,22A2,2 0 0,1 7,20V15M9,7A2,2 0 0,1 7,5A2,2 0 0,1 9,3A2,2 0 0,1 11,5V7H9M9,8A2,2 0 0,1 11,10A2,2 0 0,1 9,12H4A2,2 0 0,1 2,10A2,2 0 0,1 4,8H9M17,10A2,2 0 0,1 19,8A2,2 0 0,1 21,10A2,2 0 0,1 19,12H17V10M16,10A2,2 0 0,1 14,12A2,2 0 0,1 12,10V5A2,2 0 0,1 14,3A2,2 0 0,1 16,5V10M14,18A2,2 0 0,1 16,20A2,2 0 0,1 14,22A2,2 0 0,1 12,20V18H14M14,17A2,2 0 0,1 12,15A2,2 0 0,1 14,13H19A2,2 0 0,1 21,15A2,2 0 0,1 19,17H14Z"/></svg>
<div style="left:3767.00px;top:473.00px;width:0;height:0;transform:rotate(90deg);transform-origin:0 0"><div class="t" style="left:-2.02px;top:-25.00px;font-size:30px;transform:scaleX(1.0082);transform-origin:0 0;color:#fff;">Help</div></div>
<svg viewBox="0 0 24 24" style="left:3762.80px;top:556.85px;width:28.8px;height:28.8px;transform:rotate(90deg);"><path fill="#5c5f6e" fill-rule="evenodd" d="M14,3V5H17.59L7.76,14.83L9.17,16.24L19,6.41V10H21V3M19,19H5V5H12V3H5C3.89,3 3,3.9 3,5V19A2,2 0 0,0 5,21H19A2,2 0 0,0 21,19V12H19V19Z"/></svg>
<div style="left:3745px;top:623px;width:64px;height:330px;background:#2f3342;border:2px solid #404559;border-radius:9px;box-sizing:border-box"></div>
<svg viewBox="0 0 24 24" style="left:3762.80px;top:644.80px;width:28.8px;height:28.8px;transform:rotate(90deg);"><path fill="#fff" fill-rule="evenodd" d="M12,2A10,10 0 0,0 2,12C2,16.42 4.87,20.17 8.84,21.5C9.34,21.58 9.5,21.27 9.5,21C9.5,20.77 9.5,20.14 9.5,19.31C6.73,19.91 6.14,17.97 6.14,17.97C5.68,16.81 5.03,16.5 5.03,16.5C4.12,15.88 5.1,15.9 5.1,15.9C6.1,15.97 6.63,16.93 6.63,16.93C7.5,18.45 8.97,18 9.54,17.76C9.63,17.11 9.89,16.67 10.17,16.42C7.95,16.17 5.62,15.31 5.62,11.5C5.62,10.39 6,9.5 6.65,8.79C6.55,8.54 6.2,7.5 6.75,6.15C6.75,6.15 7.59,5.88 9.5,7.17C10.29,6.95 11.15,6.84 12,6.84C12.85,6.84 13.71,6.95 14.5,7.17C16.41,5.88 17.25,6.15 17.25,6.15C17.8,7.5 17.45,8.54 17.35,8.79C18,9.5 18.38,10.39 18.38,11.5C18.38,15.32 16.04,16.16 13.81,16.41C14.17,16.72 14.5,17.33 14.5,18.26C14.5,19.6 14.5,20.68 14.5,21C14.5,21.27 14.66,21.59 15.17,21.5C19.14,20.16 22,16.42 22,12A10,10 0 0,0 12,2Z"/></svg>
<div style="left:3767.00px;top:699.00px;width:0;height:0;transform:rotate(90deg);transform-origin:0 0"><div class="t" style="left:-0.93px;top:-25.00px;font-size:30px;transform:scaleX(0.9253);transform-origin:0 0;color:#fff;">Open an Issue</div></div>
<svg viewBox="0 0 24 24" style="left:3762.80px;top:903.85px;width:28.8px;height:28.8px;transform:rotate(90deg);"><path fill="#5c5f6e" fill-rule="evenodd" d="M14,3V5H17.59L7.76,14.83L9.17,16.24L19,6.41V10H21V3M19,19H5V5H12V3H5C3.89,3 3,3.9 3,5V19A2,2 0 0,0 5,21H19A2,2 0 0,0 21,19V12H19V19Z"/></svg>
<div style="left:3745px;top:970.5px;width:64px;height:295.0px;background:#2f3342;border:2px solid #404559;border-radius:9px;box-sizing:border-box"></div>
<svg viewBox="0 0 24 24" style="left:3762.80px;top:992.10px;width:28.8px;height:28.8px;transform:rotate(90deg);"><path fill="#fff" fill-rule="evenodd" d="M19,19H5V8H19M16,1V3H8V1H6V3H5C3.89,3 3,3.89 3,5V19A2,2 0 0,0 5,21H19A2,2 0 0,0 21,19V5C21,3.89 20.1,3 19,3H18V1M17,12H12V17H17V12Z"/></svg>
<div style="left:3767.00px;top:1046.00px;width:0;height:0;transform:rotate(90deg);transform-origin:0 0"><div class="t" style="left:-0.93px;top:-25.00px;font-size:30px;transform:scaleX(0.9318);transform-origin:0 0;color:#fff;">Get a demo</div></div>
<svg viewBox="0 0 24 24" style="left:3762.80px;top:1215.85px;width:28.8px;height:28.8px;transform:rotate(90deg);"><path fill="#5c5f6e" fill-rule="evenodd" d="M14,3V5H17.59L7.76,14.83L9.17,16.24L19,6.41V10H21V3M19,19H5V5H12V3H5C3.89,3 3,3.9 3,5V19A2,2 0 0,0 5,21H19A2,2 0 0,0 21,19V12H19V19Z"/></svg>
<div style="left:3796px;top:191px;width:18px;height:18px;background:#1e202a;border-radius:50%"></div>
<div style="left:3799px;top:194px;width:12px;height:12px;background:#fd7278;border-radius:50%"></div>
<div style="left:3767.00px;top:1533.60px;width:0;height:0;transform:rotate(90deg);transform-origin:0 0"><div class="t" style="left:-0.96px;top:-25.00px;font-size:30px;transform:scaleX(0.9584);transform-origin:0 0;color:#4e5160;">0.23.0-SNAPSHOT</div></div>
<div style="left:3741px;top:1800px;width:72px;height:64px;background:#2f3342;border:2px solid #404559;border-radius:9px;box-sizing:border-box"></div>
<svg viewBox="0 0 24 24" style="left:3762.60px;top:1818.10px;width:28.8px;height:28.8px;transform:rotate(-90deg);"><path fill="#fff" fill-rule="evenodd" d="M17.75,4.09L15.22,6.03L16.13,9.09L13.5,7.28L10.87,9.09L11.78,6.03L9.25,4.09L12.44,4L13.5,1L14.56,4L17.75,4.09M21.25,11L19.61,12.25L20.2,14.23L18.5,13.06L16.8,14.23L17.39,12.25L15.75,11L17.81,10.95L18.5,9L19.19,10.95L21.25,11M18.97,15.95C19.8,15.87 20.69,17.05 20.16,17.8C19.84,18.25 19.5,18.67 19.08,19.07C15.17,23 8.84,23 4.94,19.07C1.03,15.17 1.03,8.83 4.94,4.93C5.34,4.53 5.76,4.17 6.21,3.85C6.96,3.32 8.14,4.21 8.06,5.04C7.79,7.9 8.75,10.87 10.95,13.06C13.14,15.26 16.1,16.22 18.97,15.95M17.33,17.97C14.5,17.81 11.7,16.64 9.53,14.5C7.36,12.31 6.2,9.5 6.04,6.68C3.23,9.82 3.34,14.64 6.35,17.66C9.37,20.67 14.19,20.78 17.33,17.97Z"/></svg>
<div style="left:0px;top:0px;width:2px;height:12px;background:#626368"></div>
<div style="left:0px;top:12px;width:2px;height:1880px;background:#494b55"></div>
<div style="left:0;top:1832px;width:3840px;height:60px;pointer-events:none;overflow:hidden;background:none"><svg viewBox="0 0 3840 60" style="left:0;top:0;width:3840px;height:60px"><path fill="#000" fill-rule="evenodd" d="M0 0V60H3840V0H3838V38A20 20 0 0 1 3818 58H22A20 20 0 0 1 2 38V0Z" /><path fill="none" stroke="#4c4e58" stroke-width="2" d="M1 0V38A21 21 0 0 0 22 59H3818A21 21 0 0 0 3839 38V0"/></svg></div>
<div style="left:3838px;top:12px;width:2px;height:1822px;background:#4a4c56"></div>
</div></body></html>
